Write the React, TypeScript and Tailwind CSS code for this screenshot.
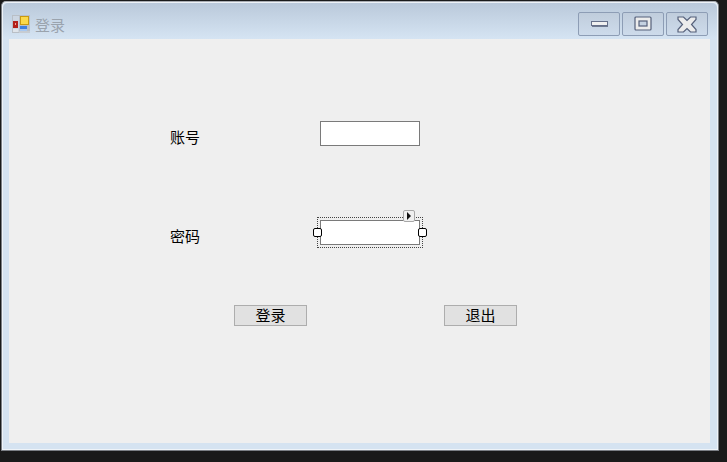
const cjk = "font-['Noto_Sans_CJK_SC','Noto_Sans',sans-serif]"

function CaptionButton({ children }: { children: React.ReactNode }) {
  return (
    <div className="w-[42px] h-[24px] flex items-center justify-center rounded-[2px] border border-[#8d9db5] bg-[linear-gradient(#c0cddc,#cddbeb)]">
      {children}
    </div>
  )
}

function AppIcon() {
  return (
    <svg width="18" height="18" viewBox="0 0 18 18" className="shrink-0">
      <rect x="0" y="0" width="18" height="18" fill="#b9bfc6" />
      <rect x="1" y="1" width="6" height="16" fill="#ccd6e2" />
      <rect x="1" y="6" width="5" height="7" fill="#b3201a" />
      <rect x="3" y="8" width="1" height="2" fill="#f0a090" />
      <rect x="1" y="14" width="5" height="3" fill="#dfe4ea" />
      <rect x="8" y="1" width="9" height="9" fill="#c99a10" />
      <rect x="9" y="2" width="7" height="7" fill="#fbd94a" />
      <rect x="8" y="11" width="7" height="5" fill="#3f7fe0" />
      <rect x="8" y="14" width="7" height="2" fill="#a8c8f0" />
      <rect x="7" y="16" width="11" height="2" fill="#c7ccd2" />
    </svg>
  )
}

function FormButton({ label }: { label: string }) {
  return (
    <div className="w-[73px] h-[21px] flex items-center justify-center border border-[#adadad] bg-[#e1e1e1] pb-[2px] text-[15px] leading-none text-black">
      {label}
    </div>
  )
}

export default function App() {
  return (
    <div className={`w-[727px] h-[462px] overflow-hidden bg-[#1a1a1a] pl-px pt-px ${cjk}`}>
      <div className="w-[718px] h-[450px] flex flex-col rounded-t-[5px] border border-[#7b7f85] border-t-[#a9adb3] bg-[#d5e3f1] shadow-[inset_0_0_0_1px_#eef3f8]">
        {/* title bar */}
        <div className="h-[36px] shrink-0 flex rounded-t-[5px] bg-[linear-gradient(#bac9da,#d5e4f3)] pl-[9px] pr-[9px] pt-[9px] mx-px mt-px">
          <div className="flex items-start gap-[5px] pt-[3px]">
            <AppIcon />
            <span className="text-[15px] leading-[20px] text-[#9aa3ad]">登录</span>
          </div>
          <div className="ml-auto flex gap-[2px]">
            <CaptionButton>
              <svg width="19" height="8" viewBox="0 0 19 8">
                <rect x="1.5" y="1.5" width="16" height="4" fill="#f0f0f0" stroke="#66708a" />
                <rect x="2" y="6" width="16" height="1" fill="#6f7a90" />
              </svg>
            </CaptionButton>
            <CaptionButton>
              <svg width="19" height="16" viewBox="0 0 19 16">
                <rect x="1" y="1" width="16" height="13" rx="1" fill="#ececec" stroke="#55607a" strokeWidth="1.2" />
                <rect x="5" y="5" width="8" height="5" fill="#c5d2e1" stroke="#55607a" strokeWidth="1.2" />
              </svg>
            </CaptionButton>
            <CaptionButton>
              <svg width="20" height="17" viewBox="0 0 20 17">
                <path
                  d="M1 1H6.5L10 4.5L13.5 1H19V3.5L14.5 8.5L19 13.5V16H13.5L10 12.5L6.5 16H1V13.5L5.5 8.5L1 3.5Z"
                  fill="#ececec"
                  stroke="#55607a"
                  strokeWidth="1.2"
                />
              </svg>
            </CaptionButton>
          </div>
        </div>

        {/* client area */}
        <div className="ml-[7px] w-[701px] h-[404px] bg-[#efefef] pl-[161px] text-[15px] text-black">
          <div className="mt-[82px] h-[25px] flex items-start">
            <div className="w-[150px] pt-[5px] leading-[22px]">账号</div>
            <div className="w-[100px] h-[25px] border border-[#7a7a7a] bg-white" />
          </div>

          <div className="mt-[74px] h-[25px] flex items-start">
            <div className="w-[150px] pt-[5px] leading-[22px]">密码</div>
            <div className="relative w-[100px] h-[25px] border border-[#7a7a7a] bg-white">
              {/* designer selection */}
              <div className="absolute -left-[4px] -top-[4px] -right-[4px] -bottom-[4px] border border-dotted border-[#444]" />
              <div className="absolute -left-[8px] top-[7px] w-[9px] h-[9px] rounded-[2px] border border-black bg-white" />
              <div className="absolute -right-[8px] top-[7px] w-[9px] h-[9px] rounded-[2px] border border-black bg-white" />
              <div className="absolute right-[4px] -top-[11px] w-[12px] h-[12px] flex items-center justify-center rounded-[2px] border border-[#a8a8a8] bg-[#f0f0f0]">
                <svg width="6" height="8" viewBox="0 0 6 8">
                  <path d="M1 0V8L5 4Z" fill="#111" />
                </svg>
              </div>
            </div>
          </div>

          <div className="mt-[60px] ml-[64px] flex gap-[137px]">
            <FormButton label="登录" />
            <FormButton label="退出" />
          </div>
        </div>
      </div>
    </div>
  )
}
